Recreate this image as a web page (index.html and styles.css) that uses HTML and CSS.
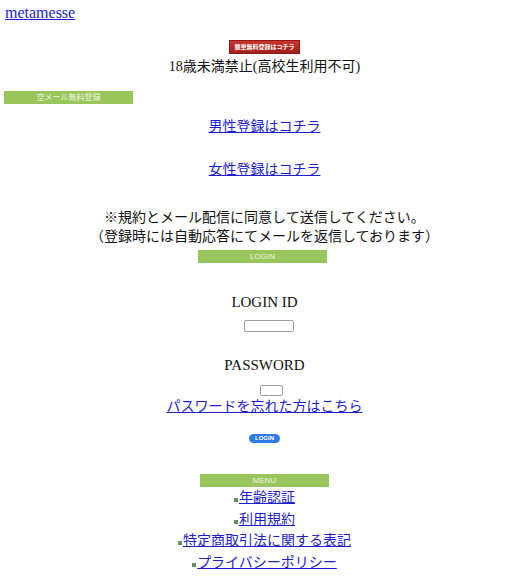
FILE: index.html
```html
<!DOCTYPE html>
<html lang="ja">
<head>
<meta charset="utf-8">
<title>metamesse</title>
<link rel="stylesheet" href="styles.css">
</head>
<body>
<header class="site">
  <a class="brand" href="#">metamesse</a>
</header>
<main class="page">
  <a class="btn-red" href="#">簡単無料登録はコチラ</a>
  <p class="age">18歳未満禁止(高校生利用不可)</p>
  <div class="bar bar-left">空メール無料登録</div>
  <p class="reg reg-male"><a href="#">男性登録はコチラ</a></p>
  <p class="reg reg-female"><a href="#">女性登録はコチラ</a></p>
  <p class="notice">※規約とメール配信に同意して送信してください。<br>（登録時には自動応答にてメールを返信しております）</p>
  <div class="bar bar-login">LOGIN</div>
  <form class="login">
    <label class="field-label label-id">LOGIN ID</label>
    <input class="input input-id" type="text">
    <label class="field-label label-pw">PASSWORD</label>
    <input class="input input-pw" type="password">
    <a class="forgot" href="#">パスワードを忘れた方はこちら</a>
    <button class="btn-login" type="button">LOGIN</button>
  </form>
  <div class="bar bar-menu">MENU</div>
  <ul class="menu">
    <li><span class="dot"></span><a href="#">年齢認証</a></li>
    <li><span class="dot"></span><a href="#">利用規約</a></li>
    <li><span class="dot"></span><a href="#">特定商取引法に関する表記</a></li>
    <li><span class="dot"></span><a href="#">プライバシーポリシー</a></li>
  </ul>
</main>
</body>
</html>
```
FILE: styles.css
```css
html, body {
  margin: 0;
  padding: 0;
  background: #ffffff;
}
body {
  font-family: "Liberation Serif", "Noto Sans CJK JP", serif;
  font-size: 14px;
  color: #111111;
}
a {
  color: #1d1dd0;
}
.site {
  padding: 4px 0 0 5px;
  line-height: 18px;
  height: 18px;
}
.brand {
  font-size: 16px;
}
.page {
  display: flex;
  flex-direction: column;
  align-items: center;
  text-align: center;
}
.page p {
  margin: 0;
}
.btn-red {
  display: flex;
  align-items: center;
  justify-content: center;
  width: 71px;
  height: 14px;
  margin-top: 18px;
  box-sizing: border-box;
  background: linear-gradient(#c8352c, #a11f1a);
  border: 1px solid #8e1a16;
  color: #ffffff;
  font-family: "Noto Sans CJK JP", sans-serif;
  font-size: 6px;
  font-weight: 700;
  text-decoration: none;
  line-height: 1;
}
.age {
  margin-top: 3px !important;
  line-height: 20px;
  font-size: 14px;
}
.bar {
  width: 129px;
  height: 13px;
  background: #99c65a;
  color: #eef6e2;
  font-family: "Liberation Sans", "Noto Sans CJK JP", sans-serif;
  font-size: 8px;
  line-height: 13px;
  text-align: center;
}
.bar-left {
  align-self: flex-start;
  margin: 14px 0 0 4px;
}
.reg {
  line-height: 20px;
}
.reg-male {
  margin-top: 13px !important;
}
.reg-female {
  margin-top: 23px !important;
}
.notice {
  margin-top: 29px !important;
  line-height: 18.5px;
}
.bar-login {
  margin-top: 4px;
  margin-right: 4px;
}
.login {
  display: flex;
  flex-direction: column;
  align-items: center;
  margin: 0;
}
.field-label {
  font-size: 15px;
  line-height: 20px;
}
.label-id {
  margin-top: 29px;
}
.label-pw {
  margin-top: 23px;
}
.input {
  display: block;
  box-sizing: border-box;
  height: 12px;
  padding: 0;
  border: 1px solid #9d9d9d;
  border-radius: 2px;
  background: #ffffff;
}
.input-id {
  width: 50px;
  margin-top: 8px;
  margin-left: 9px;
}
.input-pw {
  width: 23px;
  height: 11px;
  margin-top: 10px;
  margin-left: 14px;
}
.forgot {
  margin-top: 1px;
  line-height: 20px;
  font-size: 14px;
}
.btn-login {
  width: 31px;
  height: 9px;
  margin-top: 17px;
  padding: 0;
  border: none;
  border-radius: 5px;
  background: #2f7ae6;
  color: #ffffff;
  font-family: "Liberation Sans", sans-serif;
  font-size: 6px;
  font-weight: 700;
  line-height: 9px;
}
.bar-menu {
  margin-top: 31px;
}
.menu {
  list-style: none;
  margin: 0;
  padding: 0;
  line-height: 21.5px;
}
.dot {
  display: inline-block;
  width: 4px;
  height: 4px;
  margin-right: 1px;
  background: #5f9060;
  vertical-align: baseline;
}
```
